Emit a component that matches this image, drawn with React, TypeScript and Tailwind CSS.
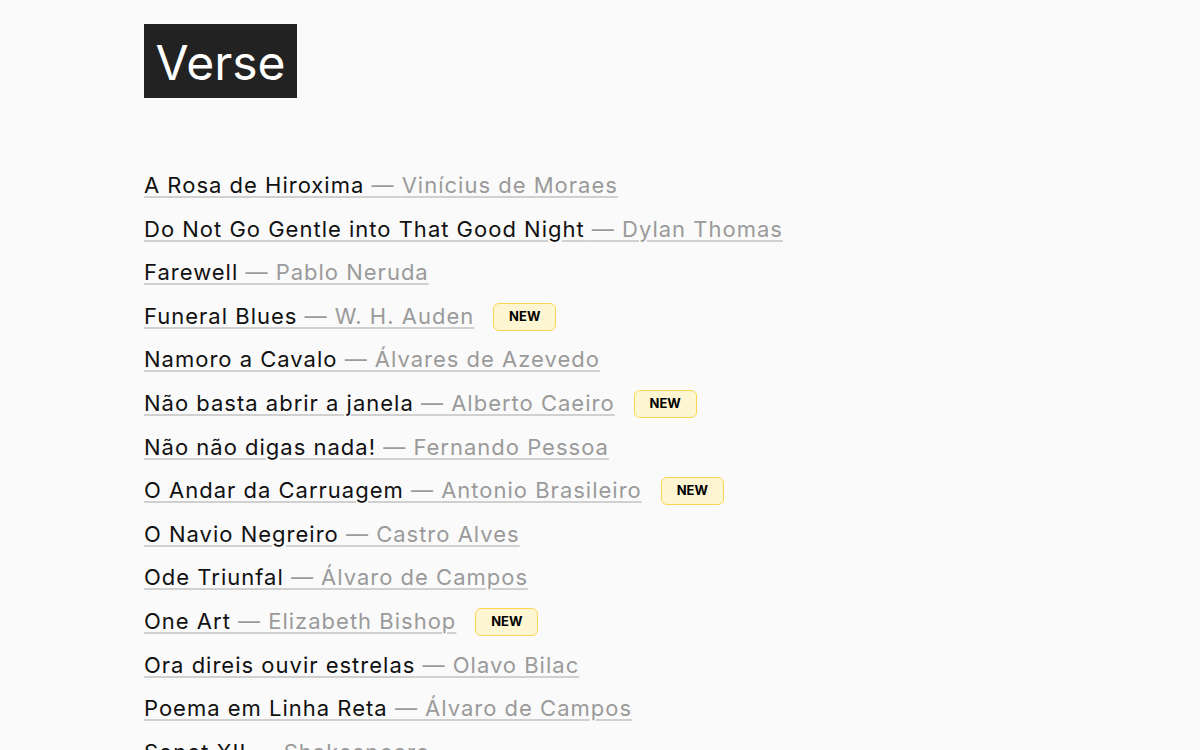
const poems = [
  { title: "A Rosa de Hiroxima", author: "Vinícius de Moraes" },
  { title: "Do Not Go Gentle into That Good Night", author: "Dylan Thomas" },
  { title: "Farewell", author: "Pablo Neruda" },
  { title: "Funeral Blues", author: "W. H. Auden", isNew: true },
  { title: "Namoro a Cavalo", author: "Álvares de Azevedo" },
  { title: "Não basta abrir a janela", author: "Alberto Caeiro", isNew: true },
  { title: "Não não digas nada!", author: "Fernando Pessoa" },
  { title: "O Andar da Carruagem", author: "Antonio Brasileiro", isNew: true },
  { title: "O Navio Negreiro", author: "Castro Alves" },
  { title: "Ode Triunfal", author: "Álvaro de Campos" },
  { title: "One Art", author: "Elizabeth Bishop", isNew: true },
  { title: "Ora direis ouvir estrelas", author: "Olavo Bilac" },
  { title: "Poema em Linha Reta", author: "Álvaro de Campos" },
  { title: "Sonet XII", author: "Shakespeare" },
];

export default function App() {
  return (
    <main className="min-h-screen bg-[#fafafa] font-['Inter',sans-serif] text-[#111]">
      <div className="px-[144px] pt-[24px]">
        <h1 className="inline-flex h-[74px] items-center bg-[#222] px-[11.5px] pt-[3px] text-[48px] leading-none text-white">
          Verse
        </h1>

        <ul className="mt-[66px]">
          {poems.map((poem) => (
            <li
              key={poem.title}
              className="flex items-center text-[22px] leading-[43.6px] tracking-[1px]"
            >
              <a
                href="#"
                className="underline decoration-[#d0d0d0] decoration-2 underline-offset-[3px]"
              >
                <span className="text-[#111]">{poem.title}</span>
                <span className="text-[#9a9a9a]"> — {poem.author}</span>
              </a>
              {poem.isNew && (
                <span className="ml-[19px] inline-flex h-[28px] w-[63px] items-center justify-center rounded-[6px] border border-[#fcd653] bg-[#fef6d3] text-[13px] font-bold leading-none tracking-normal text-black">
                  NEW
                </span>
              )}
            </li>
          ))}
        </ul>
      </div>
    </main>
  );
}
